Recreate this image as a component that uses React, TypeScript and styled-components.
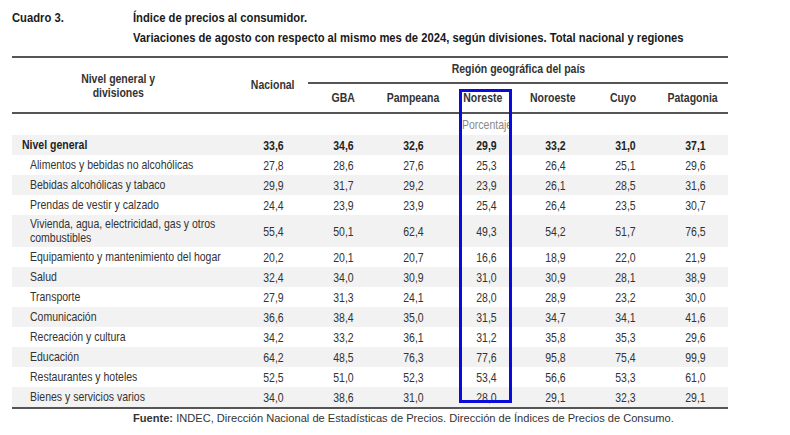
import React from 'react';
import styled, { createGlobalStyle } from 'styled-components';

const GlobalStyle = createGlobalStyle`
  body {
    margin: 0;
    background: #ffffff;
    font-family: 'Liberation Sans', Arial, sans-serif;
    color: #2b2b2b;
  }
`;

interface Row {
  label: string[];
  values: string[];
  bold?: boolean;
  tall?: boolean;
}

const regions = ['GBA', 'Pampeana', 'Noreste', 'Noroeste', 'Cuyo', 'Patagonia'];

const rows: Row[] = [
  { label: ['Nivel general'], values: ['33,6', '34,6', '32,6', '29,9', '33,2', '31,0', '37,1'], bold: true },
  { label: ['Alimentos y bebidas no alcohólicas'], values: ['27,8', '28,6', '27,6', '25,3', '26,4', '25,1', '29,6'] },
  { label: ['Bebidas alcohólicas y tabaco'], values: ['29,9', '31,7', '29,2', '23,9', '26,1', '28,5', '31,6'] },
  { label: ['Prendas de vestir y calzado'], values: ['24,4', '23,9', '23,9', '25,4', '26,4', '23,5', '30,7'] },
  {
    label: ['Vivienda, agua, electricidad, gas y otros', 'combustibles'],
    values: ['55,4', '50,1', '62,4', '49,3', '54,2', '51,7', '76,5'],
    tall: true,
  },
  { label: ['Equipamiento y mantenimiento del hogar'], values: ['20,2', '20,1', '20,7', '16,6', '18,9', '22,0', '21,9'] },
  { label: ['Salud'], values: ['32,4', '34,0', '30,9', '31,0', '30,9', '28,1', '38,9'] },
  { label: ['Transporte'], values: ['27,9', '31,3', '24,1', '28,0', '28,9', '23,2', '30,0'] },
  { label: ['Comunicación'], values: ['36,6', '38,4', '35,0', '31,5', '34,7', '34,1', '41,6'] },
  { label: ['Recreación y cultura'], values: ['34,2', '33,2', '36,1', '31,2', '35,8', '35,3', '29,6'] },
  { label: ['Educación'], values: ['64,2', '48,5', '76,3', '77,6', '95,8', '75,4', '99,9'] },
  { label: ['Restaurantes y hoteles'], values: ['52,5', '51,0', '52,3', '53,4', '56,6', '53,3', '61,0'] },
  { label: ['Bienes y servicios varios'], values: ['34,0', '38,6', '31,0', '28,0', '29,1', '32,3', '29,1'] },
];

// Arial Narrow is not installed: condense Liberation Sans horizontally instead
const Narrow = styled.span<{ $origin?: string }>`
  display: inline-block;
  white-space: nowrap;
  transform: scaleX(0.82);
  transform-origin: ${(p) => p.$origin || 'center'};
`;

const Page = styled.div`
  width: 716px;
  padding: 8px 0 0 12px;
`;

const TitleBlock = styled.div`
  display: grid;
  grid-template-columns: 121px 1fr;
  font-weight: 700;
  font-size: 13.7px;
  line-height: 20px;
  color: #1a1a1a;
  height: 48px;
`;

const TitleLines = styled.div`
  display: flex;
  flex-direction: column;
  align-items: flex-start;
`;

const TableWrap = styled.div`
  position: relative;
`;

const columns = '226px repeat(7, 70px)';

const HeadGrid = styled.div`
  display: grid;
  grid-template-columns: ${columns};
  grid-template-rows: 26px 28px;
  border-top: 2px solid #555;
  border-bottom: 2px solid #555;
  font-weight: 700;
  font-size: 12.8px;
  color: #333;
`;

const HeadCell = styled.div<{ $span?: boolean; $col?: string }>`
  display: flex;
  flex-direction: column;
  align-items: center;
  justify-content: center;
  line-height: 14px;
  ${(p) => (p.$span ? 'grid-row: 1 / 3;' : '')}
  ${(p) => (p.$col ? `grid-column: ${p.$col};` : '')}
`;

const LabelHead = styled(HeadCell)`
  padding-right: 14px;
  padding-top: 2px;
`;

const RegionTitle = styled(HeadCell)`
  border-bottom: 2px solid #555;
  padding-bottom: 2px;
`;

const UnitRow = styled.div`
  display: grid;
  grid-template-columns: ${columns};
  height: 21px;
  align-items: center;
`;

const UnitText = styled.div`
  grid-column: 5;
  margin-left: 14px;
  font-size: 12.8px;
  color: #8a8a8a;
`;

const Body = styled.div`
  border-bottom: 2px solid #555;
`;

const BodyRow = styled.div<{ $striped: boolean; $tall?: boolean; $bold?: boolean }>`
  display: grid;
  grid-template-columns: ${columns};
  height: ${(p) => (p.$tall ? '32px' : '20px')};
  align-items: center;
  background: ${(p) => (p.$striped ? '#f2f2f2' : '#ffffff')};
  font-size: 12.8px;
  font-weight: ${(p) => (p.$bold ? 700 : 400)};
  color: ${(p) => (p.$bold ? '#1f1f1f' : '#333')};
`;

const Label = styled.div<{ $bold?: boolean }>`
  display: flex;
  flex-direction: column;
  align-items: flex-start;
  padding-left: ${(p) => (p.$bold ? '10px' : '18px')};
  line-height: 14px;
`;

const Value = styled.div<{ $shift: number }>`
  text-align: center;
  padding-left: ${(p) => p.$shift}px;
`;

const Highlight = styled.div`
  position: absolute;
  left: 447px;
  top: 33px;
  width: 53px;
  height: 314px;
  box-sizing: border-box;
  border: 3px solid #0a0adb;
  pointer-events: none;
`;

const Footer = styled.div`
  padding: 3px 0 0 121px;
  font-size: 11.1px;
  color: #333;
  white-space: nowrap;
`;

const shifts = [0, 0, 0, 6, 4, 4, 4];

export default function App() {
  return (
    <>
      <GlobalStyle />
      <Page>
        <TitleBlock>
          <span>
            <Narrow $origin="left">Cuadro 3.</Narrow>
          </span>
          <TitleLines>
            <Narrow $origin="left">Índice de precios al consumidor.</Narrow>
            <Narrow $origin="left">
              Variaciones de agosto con respecto al mismo mes de 2024, según divisiones. Total nacional y regiones
            </Narrow>
          </TitleLines>
        </TitleBlock>
        <TableWrap>
          <HeadGrid>
            <LabelHead $span>
              <Narrow>Nivel general y</Narrow>
              <Narrow>divisiones</Narrow>
            </LabelHead>
            <HeadCell $span>
              <Narrow>Nacional</Narrow>
            </HeadCell>
            <RegionTitle $col="3 / 9">
              <Narrow>Región geográfica del país</Narrow>
            </RegionTitle>
            {regions.map((r) => (
              <HeadCell key={r}>
                <Narrow>{r}</Narrow>
              </HeadCell>
            ))}
          </HeadGrid>
          <UnitRow>
            <UnitText>
              <Narrow $origin="left">Porcentaje</Narrow>
            </UnitText>
          </UnitRow>
          <Body>
            {rows.map((row, i) => (
              <BodyRow key={row.label[0]} $striped={i % 2 === 0} $tall={row.tall} $bold={row.bold}>
                <Label $bold={row.bold}>
                  {row.label.map((line) => (
                    <Narrow key={line} $origin="left">
                      {line}
                    </Narrow>
                  ))}
                </Label>
                {row.values.map((v, j) => (
                  <Value key={j} $shift={shifts[j]}>
                    <Narrow>{v}</Narrow>
                  </Value>
                ))}
              </BodyRow>
            ))}
          </Body>
          <Highlight />
        </TableWrap>
        <Footer>
          <b>Fuente:</b> INDEC, Dirección Nacional de Estadísticas de Precios. Dirección de Índices de Precios de
          Consumo.
        </Footer>
      </Page>
    </>
  );
}
